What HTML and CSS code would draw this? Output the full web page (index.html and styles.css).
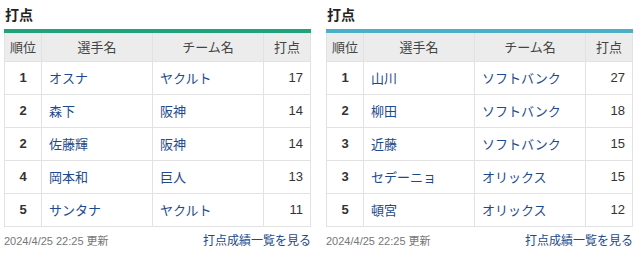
FILE: index.html
```html
<!DOCTYPE html>
<html lang="ja">
<head>
<meta charset="utf-8">
<link rel="stylesheet" href="styles.css">
</head>
<body>
<div class="wrap">
  <section class="panel panel-ce">
    <h2 class="title">打点</h2>
    <table class="rank">
      <colgroup><col class="c-rank"><col class="c-name"><col class="c-team"><col class="c-pts"></colgroup>
      <thead><tr><th>順位</th><th>選手名</th><th>チーム名</th><th>打点</th></tr></thead>
      <tbody>
        <tr><td class="r">1</td><td><a>オスナ</a></td><td><a>ヤクルト</a></td><td class="p">17</td></tr>
        <tr><td class="r">2</td><td><a>森下</a></td><td><a>阪神</a></td><td class="p">14</td></tr>
        <tr><td class="r">2</td><td><a>佐藤輝</a></td><td><a>阪神</a></td><td class="p">14</td></tr>
        <tr><td class="r">4</td><td><a>岡本和</a></td><td><a>巨人</a></td><td class="p">13</td></tr>
        <tr><td class="r">5</td><td><a>サンタナ</a></td><td><a>ヤクルト</a></td><td class="p">11</td></tr>
      </tbody>
    </table>
    <div class="foot"><span class="date">2024/4/25 22:25 更新</span><a class="more">打点成績一覧を見る</a></div>
  </section>
  <section class="panel panel-pa">
    <h2 class="title">打点</h2>
    <table class="rank">
      <colgroup><col class="c-rank"><col class="c-name"><col class="c-team"><col class="c-pts"></colgroup>
      <thead><tr><th>順位</th><th>選手名</th><th>チーム名</th><th>打点</th></tr></thead>
      <tbody>
        <tr><td class="r">1</td><td><a>山川</a></td><td><a>ソフトバンク</a></td><td class="p">27</td></tr>
        <tr><td class="r">2</td><td><a>柳田</a></td><td><a>ソフトバンク</a></td><td class="p">18</td></tr>
        <tr><td class="r">3</td><td><a>近藤</a></td><td><a>ソフトバンク</a></td><td class="p">15</td></tr>
        <tr><td class="r">3</td><td><a>セデーニョ</a></td><td><a>オリックス</a></td><td class="p">15</td></tr>
        <tr><td class="r">5</td><td><a>頓宮</a></td><td><a>オリックス</a></td><td class="p">12</td></tr>
      </tbody>
    </table>
    <div class="foot"><span class="date">2024/4/25 22:25 更新</span><a class="more">打点成績一覧を見る</a></div>
  </section>
</div>
</body>
</html>
```
FILE: styles.css
```css
* { box-sizing: border-box; }
body {
  margin: 0;
  background: #fff;
  font-family: "Liberation Sans", "Noto Sans CJK JP", sans-serif;
  color: #333;
}
.wrap {
  display: grid;
  grid-template-columns: 1fr 1fr;
  column-gap: 15px;
  padding: 6px 8px 0 4px;
}
.title {
  margin: 0 0 0 1px;
  font-size: 14px;
  line-height: 18px;
  font-weight: bold;
  color: #222;
  height: 23px;
}
.rank {
  width: 100%;
  border-collapse: collapse;
  table-layout: fixed;
  font-size: 13px;
  border-top: 4px solid #1ea37c;
}
.panel-pa .rank { border-top-color: #4cb0c8; }
.c-rank { width: 37px; }
.c-name { width: 111px; }
.c-team { width: 111px; }
.rank th, .rank td {
  border: 1px solid #e2e2e2;
}
.rank th {
  background: #ececec;
  font-weight: normal;
  color: #444;
  height: 30px;
  padding: 0;
  text-align: center;
  border-top: 0;
}
.rank td {
  height: 33px;
  padding: 0 7px;
  background: #fff;
}
.rank td.r { text-align: center; font-weight: bold; color: #333; padding: 0; }
.rank td.p { text-align: right; color: #333; }
.rank td a { color: #1d4a8c; text-decoration: none; }
.foot {
  display: flex;
  justify-content: space-between;
  align-items: center;
  margin-top: 5px;
  height: 16px;
}
.date { font-size: 11px; color: #777; }
.more { font-size: 12px; color: #1d4a8c; text-decoration: none; }
```
